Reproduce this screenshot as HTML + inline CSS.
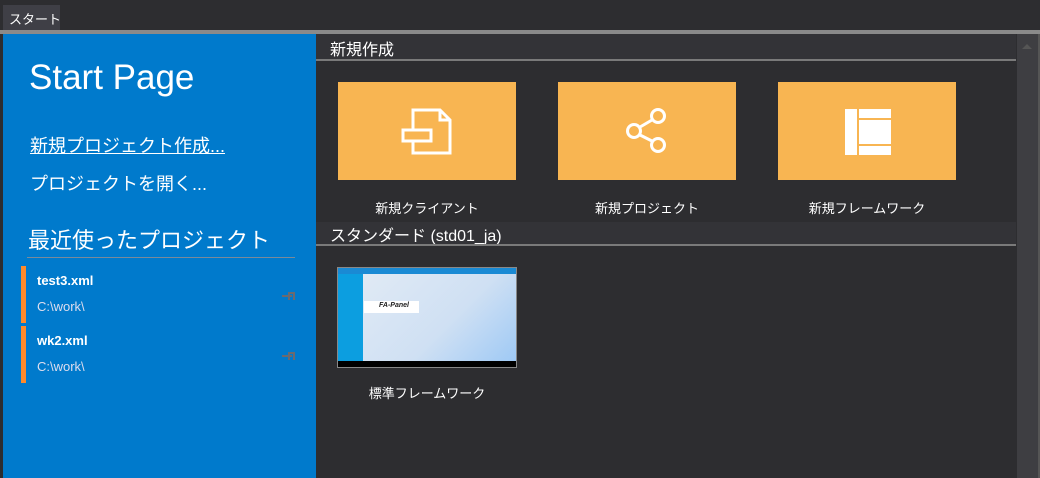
<!DOCTYPE html>
<html><head><meta charset="utf-8"><style>
*{margin:0;padding:0;box-sizing:border-box}
body{width:1040px;height:478px;background:#2d2d30;position:relative;overflow:hidden;font-family:"Segoe UI","Liberation Sans","Noto Sans CJK JP",sans-serif;color:#fff}
.a{position:absolute}
.tile{position:absolute;top:82px;width:178px;height:98px;background:#f8b552}
.lbl{position:absolute;top:198px;width:178px;text-align:center;font-size:13px}
</style></head><body>
<div class="a" style="left:3px;top:5px;width:57px;height:25px;background:#3f3f46;font-size:13px;padding:4px 0 0 6px;white-space:nowrap">スタート</div>
<div class="a" style="left:0;top:30px;width:1040px;height:4px;background:#8a8a8a"></div>
<div class="a" style="left:3px;top:34px;width:313px;height:444px;background:#007acc"></div>
<div class="a" style="left:29px;top:58px;font-size:35px;font-weight:300">Start Page</div>
<div class="a" style="left:30px;top:132px;font-size:18px;text-decoration:underline;white-space:nowrap">新規プロジェクト作成...</div>
<div class="a" style="left:30px;top:170px;font-size:18px;white-space:nowrap">プロジェクトを開く...</div>
<div class="a" style="left:28px;top:223px;font-size:22px;white-space:nowrap">最近使ったプロジェクト</div>
<div class="a" style="left:27px;top:257px;width:268px;height:1px;background:#7a8a99"></div>
<div class="a" style="left:21px;top:266px;width:5px;height:57px;background:#ff8a2b"></div>
<div class="a" style="left:21px;top:326px;width:5px;height:57px;background:#ff8a2b"></div>
<div class="a" style="left:37px;top:273px;font-size:13px;font-weight:bold">test3.xml</div>
<div class="a" style="left:37px;top:299px;font-size:13px;color:#dde">C:\work\</div>
<div class="a" style="left:37px;top:333px;font-size:13px;font-weight:bold">wk2.xml</div>
<div class="a" style="left:37px;top:359px;font-size:13px;color:#dde">C:\work\</div>
<svg class="a" style="left:282px;top:290px" width="14" height="70"><g fill="#6a6a70"><rect x="0" y="5" width="10" height="2"/><rect x="6" y="2" width="2" height="8"/><rect x="6" y="2" width="7" height="2"/><rect x="11" y="2" width="2" height="8"/><rect x="0" y="65" width="10" height="2"/><rect x="6" y="62" width="2" height="8"/><rect x="6" y="62" width="7" height="2"/><rect x="11" y="62" width="2" height="8"/></g></svg>
<div class="a" style="left:316px;top:34px;width:700px;height:25px;background:#333337;font-size:16px;padding:2px 0 0 14px">新規作成</div>
<div class="a" style="left:316px;top:59px;width:700px;height:2px;background:#7a7a7a"></div>
<div class="tile" style="left:338px"><svg width="178" height="98"><g fill="none" stroke="#fff" stroke-width="3"><path d="M75 47V28H102L112 38V71H75V59"/><path d="M102 28V38H112"/><rect x="65" y="48" width="28" height="11"/></g></svg></div>
<div class="tile" style="left:558px"><svg width="178" height="98"><g fill="none" stroke="#fff" stroke-width="3"><circle cx="100" cy="34" r="6.5"/><circle cx="100" cy="63" r="6.5"/><circle cx="76" cy="49" r="6.5"/><path d="M82 45L94 38M82 53L94 59"/></g></svg></div>
<div class="tile" style="left:778px"><svg width="178" height="98"><g fill="#fff"><rect x="67" y="27" width="12" height="46"/><rect x="81" y="27" width="32" height="9"/><rect x="81" y="38" width="32" height="24"/><rect x="81" y="64" width="32" height="9"/></g></svg></div>
<div class="lbl" style="left:338px">新規クライアント</div>
<div class="lbl" style="left:558px">新規プロジェクト</div>
<div class="lbl" style="left:778px">新規フレームワーク</div>
<div class="a" style="left:316px;top:222px;width:700px;height:22px;background:#333337;font-size:16px;padding:0 0 0 14px">スタンダード (std01_ja)</div>
<div class="a" style="left:316px;top:244px;width:700px;height:2px;background:#7a7a7a"></div>
<div class="a" style="left:337px;top:267px;width:180px;height:101px;background:#888;padding:1px">
<div style="position:relative;width:178px;height:99px;background:linear-gradient(135deg,#e4ecf5,#cfe0f3 60%,#9cc8f5)">
<div class="a" style="left:0;top:0;width:178px;height:6px;background:#1a8ad4"></div>
<div class="a" style="left:0;top:6px;width:25px;height:87px;background:#0c9ee0"></div>
<div class="a" style="left:26px;top:33px;width:55px;height:12px;background:#fff;font-size:7px;color:#222;font-style:italic;font-weight:bold;padding:1px 0 0 15px">FA-Panel</div>
<div class="a" style="left:0;top:93px;width:178px;height:6px;background:#000"></div>
</div></div>
<div class="a" style="left:337px;top:383px;width:180px;text-align:center;font-size:13px">標準フレームワーク</div>
<div class="a" style="left:1017px;top:34px;width:21px;height:444px;background:#3e3e42"></div>
<svg class="a" style="left:1021px;top:42px" width="12" height="8"><path d="M1 7L6 2L11 7Z" fill="#555"/></svg>
<div class="a" style="left:1038px;top:34px;width:2px;height:444px;background:#555"></div>
</body></html>
